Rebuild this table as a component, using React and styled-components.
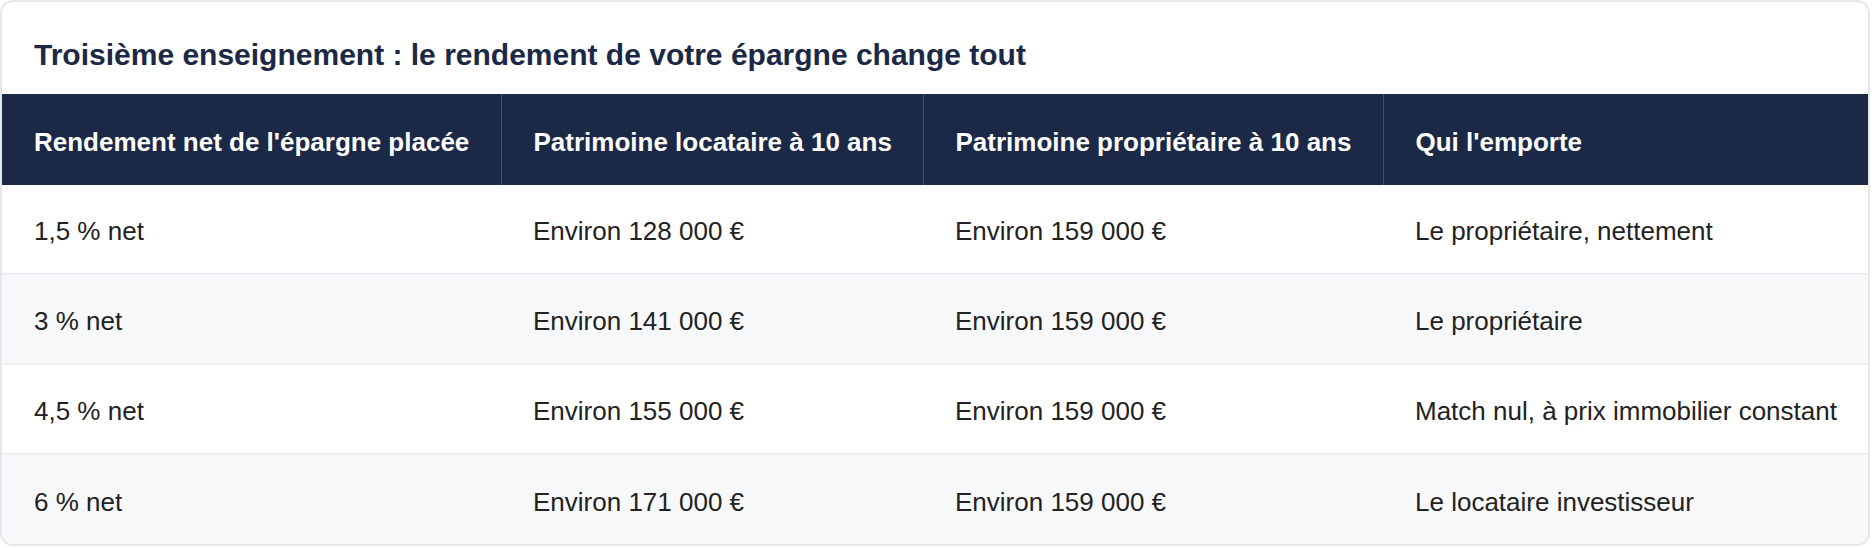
import React from "react";
import styled, { createGlobalStyle } from "styled-components";

const GlobalStyle = createGlobalStyle`
  html, body {
    margin: 0;
    padding: 0;
    background: #ffffff;
  }
  body {
    font-family: "Liberation Sans", Arial, Helvetica, sans-serif;
  }
`;

const Card = styled.section`
  box-sizing: border-box;
  width: 1870px;
  border: 2px solid #e5e7eb;
  border-radius: 13px;
  background: #ffffff;
  overflow: hidden;
`;

const Title = styled.h3`
  margin: 0;
  padding: 35px 32px 21px;
  font-size: 30px;
  line-height: 36px;
  font-weight: 700;
  color: #1b2846;
`;

const Table = styled.table`
  width: 100%;
  border-collapse: collapse;
  table-layout: fixed;
  font-size: 26px;
  line-height: 38px;
`;

const Col = styled.col`
  width: ${(p) => p.$w}px;
`;

const HeadCell = styled.th`
  box-sizing: border-box;
  height: 91px;
  padding: 5px 32px 0;
  text-align: left;
  font-weight: 700;
  color: #ffffff;
  background: #1b2846;
  white-space: nowrap;
  border-left: 1px solid #45526d;

  &:first-child {
    border-left: none;
  }
`;

const Row = styled.tr`
  background: ${(p) => (p.$alt ? "#f7f8fa" : "#ffffff")};
  border-top: ${(p) => (p.$first ? "none" : "2px solid #eceef2")};
`;

const Cell = styled.td`
  box-sizing: border-box;
  height: ${(p) => (p.$first ? 89 : 90)}px;
  padding: 4px 32px 0;
  color: #222222;
  white-space: nowrap;
`;

const columns = [
  { label: "Rendement net de l'épargne placée", width: 499 },
  { label: "Patrimoine locataire à 10 ans", width: 422 },
  { label: "Patrimoine propriétaire à 10 ans", width: 460 },
  { label: "Qui l'emporte", width: 485 },
];

const rows = [
  ["1,5 % net", "Environ 128 000 €", "Environ 159 000 €", "Le propriétaire, nettement"],
  ["3 % net", "Environ 141 000 €", "Environ 159 000 €", "Le propriétaire"],
  ["4,5 % net", "Environ 155 000 €", "Environ 159 000 €", "Match nul, à prix immobilier constant"],
  ["6 % net", "Environ 171 000 €", "Environ 159 000 €", "Le locataire investisseur"],
];

export default function App() {
  return (
    <>
      <GlobalStyle />
      <Card>
        <Title>Troisième enseignement : le rendement de votre épargne change tout</Title>
        <Table>
          <colgroup>
            {columns.map((c) => (
              <Col key={c.label} $w={c.width} />
            ))}
          </colgroup>
          <thead>
            <tr>
              {columns.map((c) => (
                <HeadCell key={c.label}>{c.label}</HeadCell>
              ))}
            </tr>
          </thead>
          <tbody>
            {rows.map((r, i) => (
              <Row key={r[0]} $alt={i % 2 === 1} $first={i === 0}>
                {r.map((v, j) => (
                  <Cell key={j} $first={i === 0}>{v}</Cell>
                ))}
              </Row>
            ))}
          </tbody>
        </Table>
      </Card>
    </>
  );
}
